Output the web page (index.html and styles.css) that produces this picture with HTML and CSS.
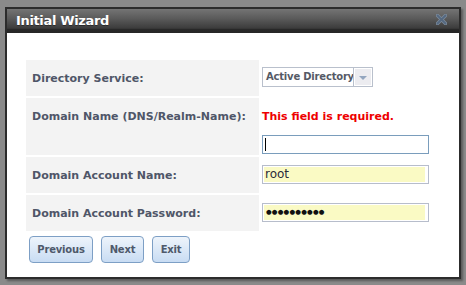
FILE: index.html
```html
<!DOCTYPE html>
<html>
<head>
<meta charset="utf-8">
<link rel="stylesheet" href="styles.css">
</head>
<body>
<div class="dialog">
  <div class="titlebar">
    <span class="title">Initial Wizard</span>
    <svg class="close" width="11" height="11" viewBox="0 0 11 11">
      <path d="M1.5 1.5 L9.5 9.5 M9.5 1.5 L1.5 9.5" stroke="#7d8c9c" stroke-width="3.4" stroke-linecap="round"/>
      <path d="M1.5 1.5 L9.5 9.5 M9.5 1.5 L1.5 9.5" stroke="#546880" stroke-width="1.8" stroke-linecap="round"/>
    </svg>
  </div>
  <div class="content">
    <div class="form">
      <div class="label r1">Directory Service:</div>
      <div class="value r1">
        <div class="select">
          <span class="select-text">Active Directory</span>
          <span class="select-btn"><span class="arrow"></span></span>
        </div>
      </div>
      <div class="label r2">Domain Name (DNS/Realm-Name):</div>
      <div class="value r2">
        <div class="error">This field is required.</div>
        <div class="input focus"><span class="caret"></span></div>
      </div>
      <div class="label r3">Domain Account Name:</div>
      <div class="value r3">
        <div class="input filled"><span class="fill">root</span></div>
      </div>
      <div class="label r4">Domain Account Password:</div>
      <div class="value r4">
        <div class="input filled"><span class="fill dots">●●●●●●●●●●</span></div>
      </div>
    </div>
    <div class="buttons">
      <button class="btn btn-prev">Previous</button>
      <button class="btn btn-next">Next</button>
      <button class="btn btn-exit">Exit</button>
    </div>
  </div>
</div>
</body>
</html>
```

FILE: styles.css
```css
html, body {
  margin: 0;
  padding: 0;
}
body {
  background: #8a8a8a;
  width: 466px;
  height: 285px;
  overflow: hidden;
  font-family: "DejaVu Sans", Verdana, sans-serif;
}
.dialog {
  margin: 7px 0 0 5px;
  width: 452px;
  height: 268px;
  border: 2px solid #2c2c2c;
  background: #fff;
  box-shadow: 2px 2px 2px rgba(0,0,0,0.35);
  display: flex;
  flex-direction: column;
}
.titlebar {
  height: 24px;
  flex: none;
  background: linear-gradient(#747474 0%, #5a5a5a 40%, #3c3c3c 80%, #282828 85%, #262626 100%);
  display: flex;
  align-items: center;
  justify-content: space-between;
  padding: 0 12px 0 9px;
}
.title {
  color: #fff;
  font-weight: bold;
  font-size: 13px;
  letter-spacing: -0.35px;
  text-shadow: 0 1px 0 rgba(0,0,0,0.4);
  margin-top: -2px;
}
.close {
  margin-top: -3px;
}
.content {
  padding: 27px 0 0 19px;
}
.form {
  display: grid;
  grid-template-columns: 233px 170px;
  row-gap: 2px;
}
.label {
  background: #f3f3f3;
  color: #4f5668;
  font-weight: bold;
  font-size: 11px;
  padding: 12px 0 0 6px;
  box-sizing: border-box;
}
.r1, .r3, .r4 { height: 36px; }
.r2 { height: 57px; }
.value {
  padding-left: 3px;
  box-sizing: border-box;
}
.value.r1 { padding-top: 7px; }
.value.r2 { padding-top: 12px; }
.value.r3, .value.r4 { padding-top: 8px; }
.select {
  display: flex;
  width: 111px;
  height: 20px;
  box-sizing: border-box;
  border: 1px solid #b9c0cc;
  background: #fff;
}
.select-text {
  flex: 1;
  font-size: 10px;
  font-weight: bold;
  letter-spacing: -0.2px;
  color: #555a66;
  padding: 3px 0 0 3px;
  white-space: nowrap;
  overflow: hidden;
}
.select-btn {
  width: 18px;
  flex: none;
  border-left: 1px solid #b9c0cc;
  background: #ececf0;
  box-shadow: inset 0 0 0 1px #fff;
  display: flex;
  align-items: center;
  justify-content: center;
}
.arrow {
  width: 0;
  height: 0;
  border-left: 4px solid transparent;
  border-right: 4px solid transparent;
  border-top: 4px solid #93a6bf;
  margin-top: 1px;
}
.error {
  color: #ee0000;
  font-weight: bold;
  font-size: 11px;
  height: 25px;
}
.input {
  width: 167px;
  height: 19px;
  box-sizing: border-box;
  border: 1px solid #b7bdcb;
  background: #fff;
  display: flex;
}
.input.focus {
  border-color: #7a9dbc;
  align-items: center;
  padding-left: 2px;
}
.caret {
  width: 1px;
  height: 13px;
  background: #000;
}
.input.filled {
  padding: 1px 3px 1px 1px;
}
.fill {
  flex: 1;
  background: #fafac4;
  font-size: 12px;
  color: #2a2a3a;
  padding-left: 1px;
  line-height: 15px;
}
.dots {
  font-size: 6.5px;
  letter-spacing: 0.2px;
  color: #111;
  padding-left: 2px;
}
.buttons {
  display: flex;
  gap: 8px;
  margin-top: 5px;
  padding-left: 3px;
}
.btn {
  height: 27px;
  padding: 0;
  border: 1px solid #7d9fc5;
  border-radius: 4px;
  background: linear-gradient(#eef4fb, #c8dcf3);
  font-family: "DejaVu Sans", Verdana, sans-serif;
  font-weight: bold;
  font-size: 10px;
  letter-spacing: -0.2px;
  color: #4e596b;
}
.btn-prev { width: 64px; }
.btn-next { width: 43px; }
.btn-exit { width: 38px; }
```
